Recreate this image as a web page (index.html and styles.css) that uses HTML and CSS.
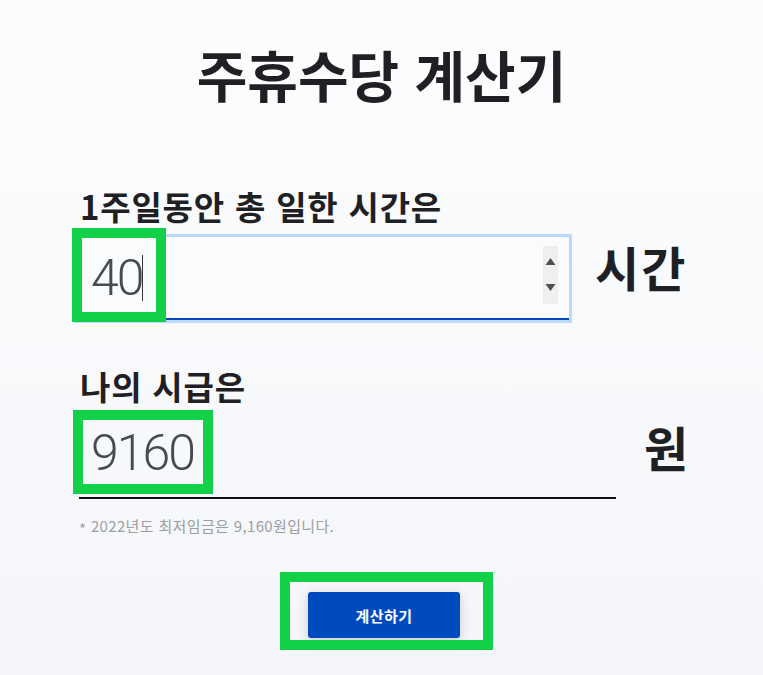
FILE: index.html
```html
<!DOCTYPE html>
<html lang="ko">
<head>
<meta charset="utf-8">
<title>주휴수당 계산기</title>
<link rel="stylesheet" href="styles.css">
</head>
<body>
<main class="page">
  <h1 class="title">주휴수당 계산기</h1>
  <section class="form">
    <div class="label">1주일동안 총 일한 시간은</div>
    <div class="row row-hours">
      <div class="field field-focus">
        <span class="value">40</span><span class="caret"></span>
        <div class="spinner">
          <svg width="15" height="58" viewBox="0 0 15 58">
            <rect width="15" height="58" fill="#efefef"/>
            <path d="M2.5 19 L7.5 12 L12.5 19 Z" fill="#505050"/>
            <path d="M2.5 38 L7.5 45 L12.5 38 Z" fill="#505050"/>
          </svg>
        </div>
      </div>
      <div class="unit unit-hours">시간</div>
    </div>
    <div class="label label-wage">나의 시급은</div>
    <div class="row row-wage">
      <div class="field field-line">
        <span class="value">9160</span>
      </div>
      <div class="unit unit-won">원</div>
    </div>
    <p class="note"><span class="star">*</span> 2022년도 최저임금은 9,160원입니다.</p>
  </section>
  <div class="actions">
    <button class="btn" type="button">계산하기</button>
  </div>
</main>
<div class="mark mark-1"></div>
<div class="mark mark-2"></div>
<div class="mark mark-3"></div>
</body>
</html>
```

FILE: styles.css
```css
html, body {
  margin: 0;
  padding: 0;
}
body {
  width: 763px;
  height: 675px;
  overflow: hidden;
  position: relative;
  background: linear-gradient(180deg, #fdfdfe 0%, #f4f6f9 100%);
  font-family: "Noto Sans CJK KR", "Noto Sans", sans-serif;
  color: #1f2023;
}
.page {
  display: flex;
  flex-direction: column;
  padding-top: 45px;
}
.title {
  margin: 0;
  text-align: center;
  font-size: 55px;
  line-height: 57px;
  font-weight: 700;
  letter-spacing: 0;
  color: #1f2023;
}
.form {
  display: flex;
  flex-direction: column;
  padding-left: 79px;
  margin-top: 88px;
}
.label {
  font-size: 33px;
  line-height: 33px;
  font-weight: 700;
  letter-spacing: 0.8px;
  padding-left: 1px;
}
.label-wage {
  margin-top: 50px;
}
.row {
  display: flex;
  align-items: flex-start;
}
.row-hours {
  margin-top: 14px;
}
.row-wage {
  margin-top: 6px;
}
.field {
  box-sizing: border-box;
  display: flex;
  align-items: center;
  font-family: Roboto, "Liberation Sans", sans-serif;
  font-weight: 300;
  font-size: 50px;
  color: #464b53;
  letter-spacing: -2px;
}
.field-focus {
  margin-left: -2px;
  width: 492px;
  height: 83px;
  padding-left: 14px;
  padding-right: 11px;
  border-bottom: 2px solid #0047bb;
  box-shadow: 0 0 0 3px #bcdafc;
  background: #fafbfd;
}
.field-line {
  width: 537px;
  height: 90px;
  padding-left: 12px;
  border-bottom: 2px solid #111;
}
.value {
  line-height: 50px;
}
.caret {
  width: 1px;
  height: 46px;
  background: #333;
  margin-left: 0;
}
.spinner {
  margin-left: auto;
  display: flex;
  margin-top: -6px;
}
.unit {
  font-size: 48px;
  line-height: 48px;
  font-weight: 700;
}
.unit-hours {
  margin-left: 26px;
  margin-top: 5px;
  letter-spacing: 2px;
}
.unit-won {
  margin-left: 28px;
  margin-top: 13px;
}
.note {
  margin: 18px 0 0;
  font-size: 15px;
  line-height: 17px;
  letter-spacing: 0.35px;
  color: #9b9ea4;
}
.star {
  vertical-align: -3px;
}
.actions {
  display: flex;
  justify-content: center;
  margin-top: 55px;
  padding-left: 5px;
}
.btn {
  width: 152px;
  height: 46px;
  border: none;
  border-radius: 3px;
  background: #004ac0;
  color: #fff;
  font-family: "Noto Sans CJK KR", sans-serif;
  font-size: 15px;
  font-weight: 700;
  letter-spacing: 0.5px;
  box-shadow: 0 3px 12px rgba(0, 0, 0, 0.18);
}
.mark {
  position: absolute;
  box-sizing: border-box;
  border: 10px solid #12d048;
}
.mark-1 {
  left: 72px;
  top: 228px;
  width: 94px;
  height: 94px;
}
.mark-2 {
  left: 73px;
  top: 410px;
  width: 140px;
  height: 84px;
}
.mark-3 {
  left: 280px;
  top: 572px;
  width: 213px;
  height: 78px;
}
```
